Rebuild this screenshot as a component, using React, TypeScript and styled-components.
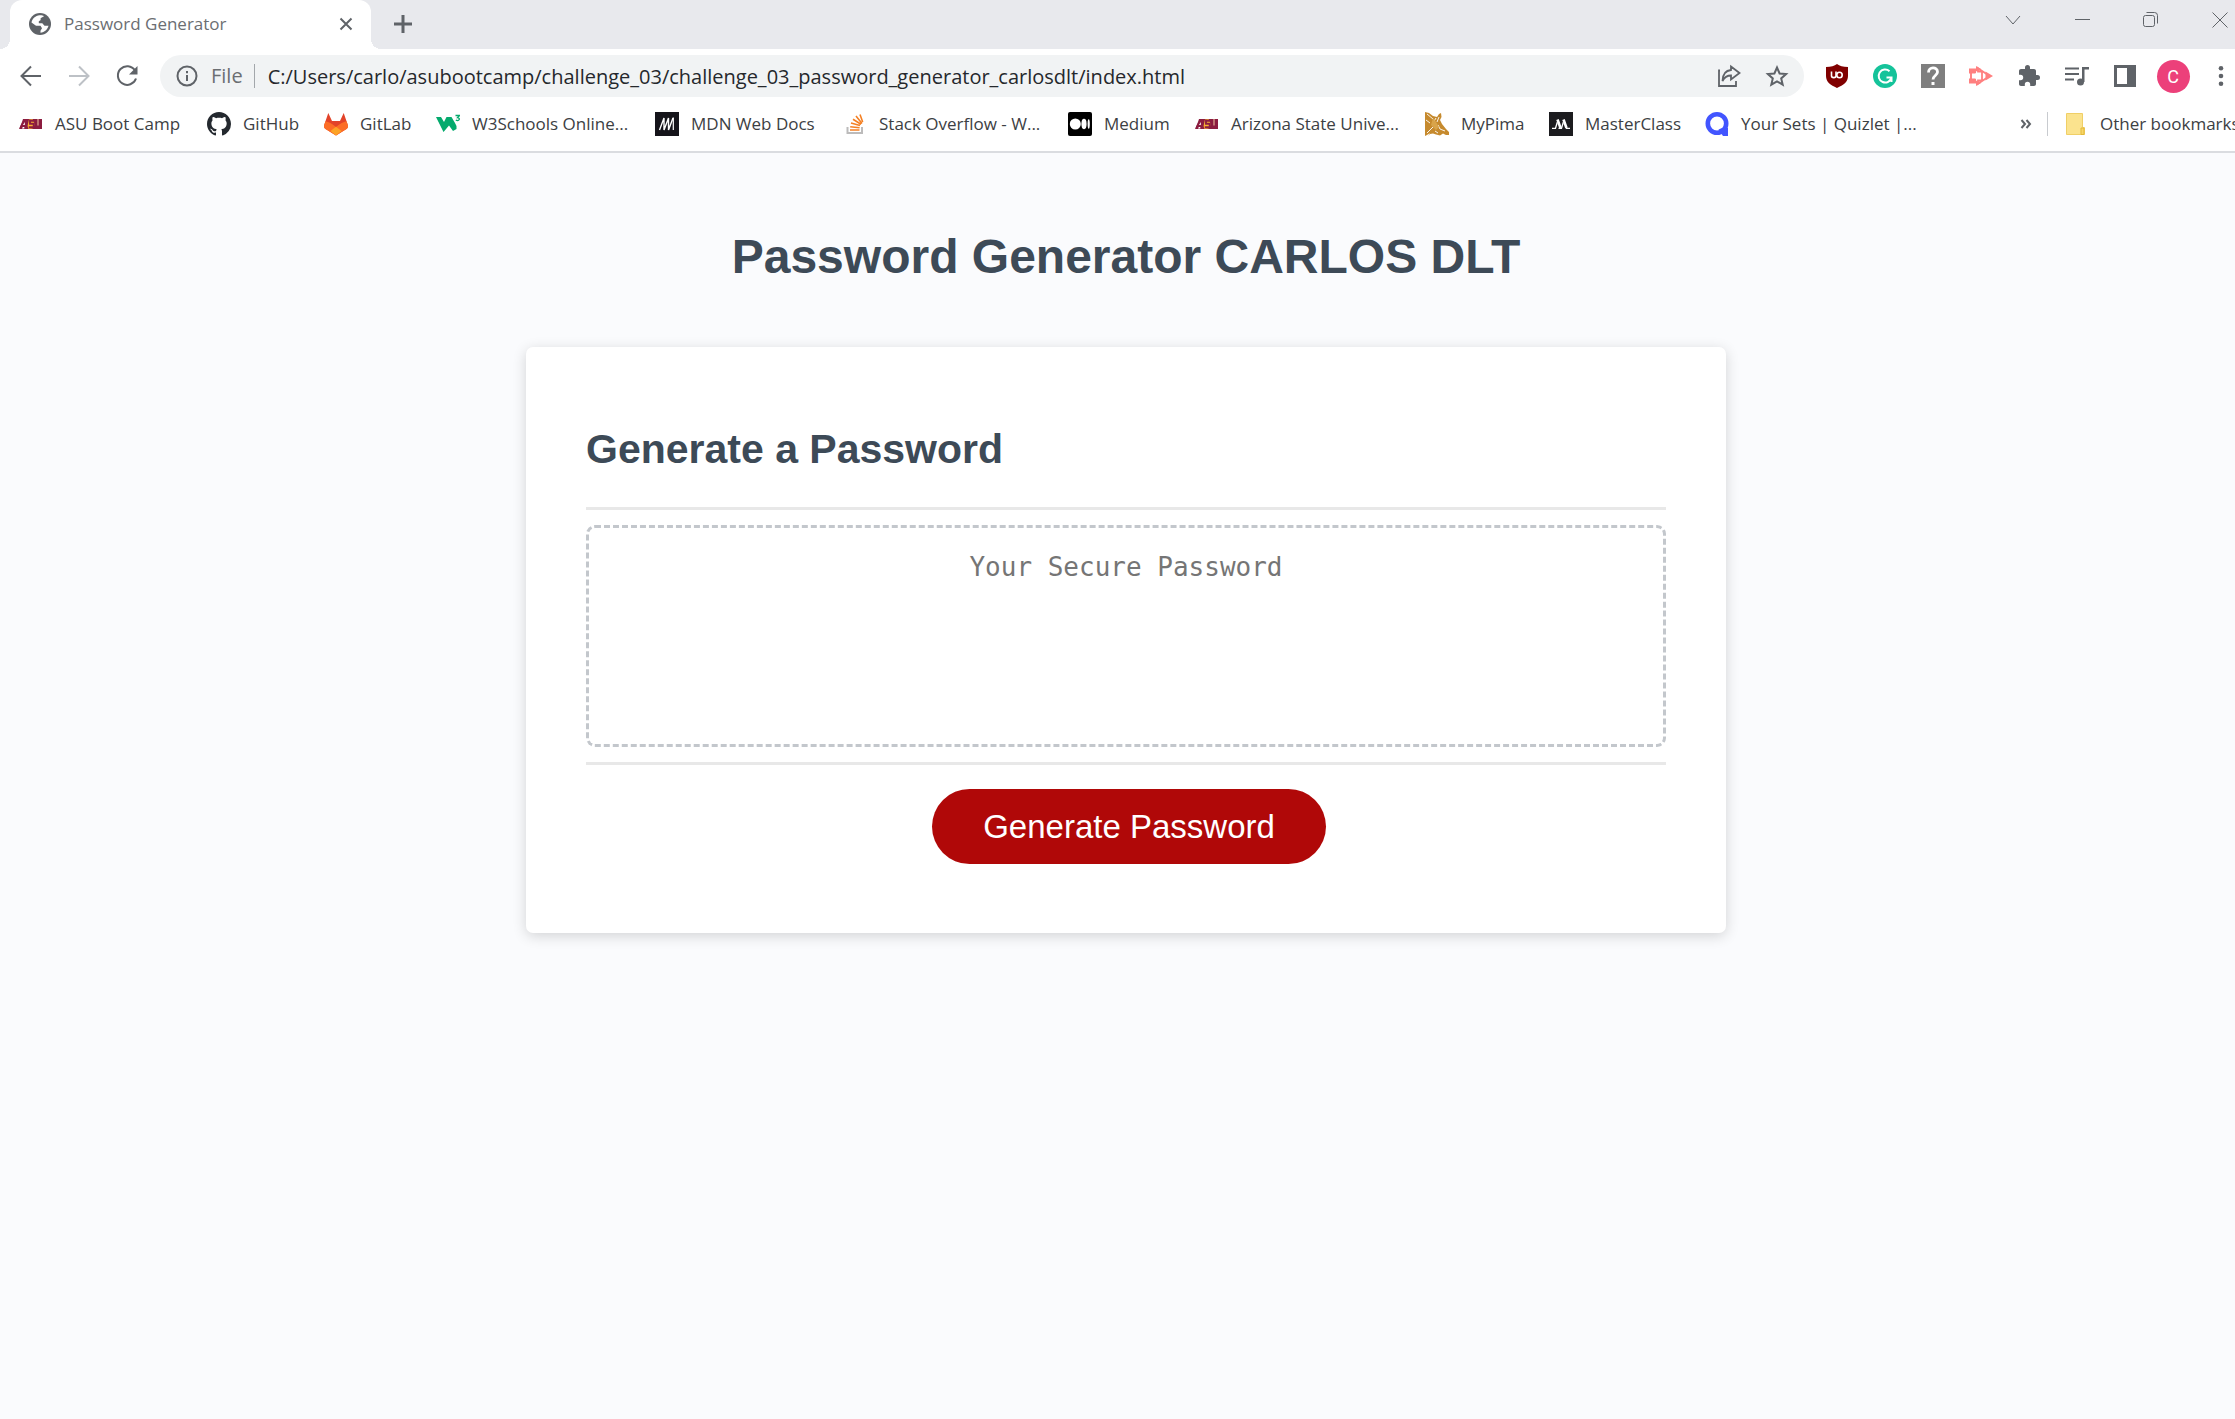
import React from "react";
import styled, { createGlobalStyle } from "styled-components";

const GlobalStyle = createGlobalStyle`
  *, *::before, *::after { box-sizing: border-box; }
  html, body { margin: 0; padding: 0; overflow-x: hidden; }
  body {
    background: #fafbfd;
    font-family: "Liberation Sans", Arial, sans-serif;
  }
  button { margin: 0; padding: 0; border: 0; background: none; font: inherit; color: inherit; }
  a { color: inherit; text-decoration: none; }
`;

const uiFont = `"Open Sans", "Noto Sans", sans-serif`;

/* The window runs 17px past the right edge of the viewport. */
const Window = styled.div`
  width: calc(100% + 17px);
  min-height: 100vh;
`;

const Chrome = styled.header`
  background: #fff;
  border-bottom: 2px solid #dadce0;
  font-family: ${uiFont};
  color: #3c4043;
`;

const TabStrip = styled.div`
  display: flex;
  height: 49px;
  padding-left: 10px;
  background: #e8e9ed;
`;

const Tab = styled.div`
  position: relative;
  display: flex;
  align-items: center;
  gap: 12px;
  width: 361px;
  padding: 0 15px 1px 18px;
  background: #fff;
  border-radius: 12px 12px 0 0;

  &::before,
  &::after {
    content: "";
    position: absolute;
    bottom: 0;
    width: 10px;
    height: 10px;
  }
  &::before {
    left: -10px;
    background: radial-gradient(circle at 0 0, #e8e9ed 10px, #fff 10px);
  }
  &::after {
    right: -10px;
    background: radial-gradient(circle at 100% 0, #e8e9ed 10px, #fff 10px);
  }
`;

const TabTitle = styled.span`
  flex: 1;
  font-size: 17px;
  line-height: 24px;
  color: #6b6e72;
`;

const IconButton = styled.button<{ $width?: number; $muted?: boolean }>`
  display: flex;
  flex: none;
  align-items: center;
  justify-content: center;
  width: ${(p) => p.$width ?? 48}px;
  height: ${(p) => (p.$width === 20 ? 20 : 42)}px;
  color: ${(p) => (p.$muted ? "#bdc1c6" : "#5f6368")};
`;

const NewTab = styled(IconButton)`
  margin: 3px 0 0 8px;
`;

const WindowControls = styled.div`
  display: flex;
  height: 40px;
  align-items: center;
  margin-left: auto;
  margin-right: -2px;
`;

const Toolbar = styled.div`
  display: flex;
  align-items: center;
  gap: 9px;
  padding: 6px 7px;
`;

const ButtonGroup = styled.div`
  display: flex;
`;

const AddressBar = styled.div`
  display: flex;
  flex: 1;
  align-items: center;
  height: 42px;
  padding-left: 15px;
  padding-right: 3px;
  background: #f1f3f4;
  border-radius: 21px;
`;

const Scheme = styled.span`
  padding: 0 11px 0 12px;
  font-size: 20px;
  line-height: 24px;
  color: #6b6e72;
`;

const Rule = styled.span`
  flex: none;
  width: 1px;
  height: 24px;
  background: #a3a7ab;
`;

const Address = styled.input`
  flex: 1;
  min-width: 0;
  height: 36px;
  padding: 0 0 0 13px;
  border: 0;
  outline: 0;
  background: transparent;
  font-family: ${uiFont};
  font-size: 20px;
  color: #25282c;
`;

const Avatar = styled.span`
  display: flex;
  align-items: center;
  justify-content: center;
  width: 33px;
  height: 33px;
  border-radius: 50%;
  background: #ec407a;
  color: #fff;
  font-family: Roboto, sans-serif;
  font-size: 18px;
`;

const Bookmarks = styled.nav`
  display: flex;
  align-items: center;
  height: 48px;
  padding: 0 0 6px 19px;
  font-size: 17px;
  line-height: 24px;
  white-space: nowrap;
`;

const Bookmark = styled.a<{ $width: number }>`
  display: flex;
  flex: none;
  align-items: center;
  gap: 12px;
  width: ${(p) => p.$width}px;

  svg { flex: none; }
`;

const Overflow = styled.div`
  display: flex;
  align-items: center;
  margin-left: auto;
`;

const BarRule = styled(Rule)`
  margin-right: 16px;
  background: #c8cbcf;
`;

const Main = styled.main`
  padding: 69px 24px;
  color: #3d4a57;
`;

const PageTitle = styled.h1`
  margin: 0;
  font-size: 48px;
  line-height: 70px;
  text-align: center;
`;

const Card = styled.section`
  display: flex;
  flex-direction: column;
  max-width: 1200px;
  margin: 55px auto 0;
  padding: 60px 60px 69px;
  background: #fff;
  border-radius: 7px;
  box-shadow: 0 3px 14px rgba(0, 0, 0, 0.16);
`;

const CardTitle = styled.h2`
  margin: 0;
  padding: 12px 0 28px;
  font-size: 41px;
  line-height: 60px;
`;

const PasswordArea = styled.div`
  padding: 15px 0;
  border-top: 3px solid #e8e8e8;
  border-bottom: 3px solid #e8e8e8;
`;

const PasswordBox = styled.textarea`
  display: block;
  width: 100%;
  height: 222px;
  padding: 21px;
  border: 3px dashed #c3c7cc;
  border-radius: 9px;
  outline: 0;
  resize: none;
  background: transparent;
  color: #3d4a57;
  font-family: "DejaVu Sans Mono", monospace;
  font-size: 26px;
  line-height: 36px;
  text-align: center;

  &::placeholder { color: #757575; opacity: 1; }
`;

const Generate = styled.button`
  align-self: center;
  height: 75px;
  margin: 24px 0 0 6px;
  padding: 0 51px;
  border-radius: 38px;
  background: #b00808;
  color: #fff;
  font-size: 33px;
`;

type SvgProps = { size?: number; box?: string; children: React.ReactNode };
const Svg = ({ size = 24, box = "0 0 24 24", children }: SvgProps) => (
  <svg width={size} height={size} viewBox={box} fill="none" aria-hidden="true">
    {children}
  </svg>
);

const Stroke = ({ d, w = 2 }: { d: string; w?: number }) => (
  <path d={d} stroke="currentColor" strokeWidth={w} />
);

const Globe = () => (
  <Svg>
    <circle cx="12" cy="12" r="11" fill="#5f6368" />
    <path
      d="M11.500 3.300c1.800-.2 3.500.2 4.500 1L13.800 5.500c-1.300.5-1.600 1.500-1 2.500l-2 1.300v1.900h3.500l2.200 2.600h4c-.8 3.700-4 6.600-8 6.900v-2l1.500-2.500-1.500-2.400H8L3.500 10.500C4.300 6.500 7.500 3.700 11.500 3.300z"
      fill="#fff"
    />
    <path d="M3.300 12.500l4.200 3 .5 2.500 2 1v1.500c-3.500-.8-6.500-4-6.700-8z" fill="#5f6368" />
  </Svg>
);

const Asu = () => (
  <Svg>
    <path d="M4 7h19v10H0l3-7z" fill="#8c1d40" />
    <path d="M10 7.500l3.500-.5 1.500 3 .5 3-2 3.500-4 .5-1-3z" fill="#f9b233" />
    <path
      d="M1.500 16L5.500 8.500h1.700V16M3.500 13.500h4M15 8.700h-4v3.100h3.700V15.300H9.800M17 7.500v7.800h4V7.500"
      stroke="#8c1d40"
      strokeWidth="1.900"
    />
    <path d="M4 13l1.800-3v3zM3 16.500l.8-1.500h1.500v1.500z" fill="#fff" />
    <path d="M18.500 7h1v6.500h-1z" fill="#f0c9a0" />
  </Svg>
);

const GitHub = () => (
  <Svg box="0 0 16 16">
    <path
      fill="#24292f"
      d="M8 0C3.580 0 0 3.580 0 8c0 3.540 2.290 6.530 5.470 7.590.4.070.55-.17.55-.38 0-.19-.01-.82-.01-1.490-2.010.37-2.530-.49-2.690-.94-.09-.23-.48-.94-.82-1.130-.28-.15-.68-.52-.01-.53.63-.01 1.080.58 1.230.82.72 1.210 1.870.87 2.330.66.070-.52.28-.87.51-1.070-1.780-.2-3.640-.89-3.640-3.950 0-.87.31-1.590.82-2.150-.08-.2-.36-1.020.08-2.120 0 0 .67-.21 2.200.82.64-.18 1.320-.27 2-.27s1.360.09 2 .27c1.530-1.040 2.200-.82 2.200-.82.44 1.100.16 1.920.08 2.120.51.56.82 1.270.82 2.150 0 3.070-1.870 3.750-3.650 3.950.29.25.54.73.54 1.480 0 1.070-.01 1.930-.01 2.200 0 .21.15.46.55.38A8.010 8.010 0 0 0 16 8c0-4.420-3.580-8-8-8z"
    />
  </Svg>
);

const GitLab = () => (
  <Svg>
    <path d="M4.300 1L8 9h8l3.700-8L24 13.500c.2 1.500-.3 2.500-1.500 3.500L12 23.500 1.500 17C.3 16-.2 15 0 13.500z" fill="#e24329" />
    <path d="M1.500 9.200C4.500 9.800 8 11.600 12 15c4-3.400 7.500-5.200 10.500-5.800L24 13.500c.2 1.500-.3 2.500-1.500 3.500L12 23.500 1.500 17C.3 16-.2 15 0 13.500z" fill="#fc6d26" />
    <path d="M12 14.800l5.500 4.200L12 23.500 6.500 19z" fill="#fca326" />
  </Svg>
);

const W3 = () => (
  <Svg>
    <path d="M0 5h5l3 5 2.500-5h5L19 11l1.500 3v3L17 19l-4-5.500L7.500 20z" fill="#04aa6d" />
    <path d="M19.500 3.500h4l-2 2.200c3.200.2 2 4-1.700 2.500" stroke="#04aa6d" strokeWidth="1.300" />
  </Svg>
);

const Mdn = () => (
  <Svg>
    <path d="M0 0h24v24H0z" fill="#15141a" />
    <path d="M4.500 18L9 6v12l4.500-12v12L18 6" stroke="#fff" strokeWidth="1.400" />
    <path d="M18.300 5.500V18" stroke="#fff" strokeWidth="1.200" />
  </Svg>
);

const StackOverflow = () => (
  <Svg>
    <path d="M4.500 15v6h14.500v-6" stroke="#bcbbbb" strokeWidth="2" />
    <path
      d="M7 18h9.500M7.200 14.800l9.400 1M8 11l9 2.600M10 7.200l8 5M13 4l6 7.500M17 2.500l2.700 7.500"
      stroke="#f48024"
      strokeWidth="1.600"
    />
  </Svg>
);

const Medium = () => (
  <Svg>
    <rect width="24" height="24" rx="2" fill="#000" />
    <circle cx="7.300" cy="12" r="5.500" fill="#fff" />
    <ellipse cx="16" cy="12" rx="2.600" ry="5.200" fill="#fff" />
    <ellipse cx="20.700" cy="12" rx="1.100" ry="4.700" fill="#fff" />
  </Svg>
);

const Pima = () => (
  <Svg>
    <path
      d="M0 0l4 1 4 3 4 1 2-3 2-1 .5 4-1.500 3 2 4 4 5 3 3 .5 3-3.500 0-3-1.500-3 2-4-1-3-1-3 .5-2 2H3l2-3-3 2-2 1z"
      fill="#c68a2e"
    />
    <path d="M2 2l6 5M11 6l-3 5M2 21l6-6M13 13l2 4 5 2M1 8l4 3M10 19l3 2M14 5l-2 5" stroke="#fff" strokeWidth="0.900" />
    <path d="M8 6l3 4 3 5-3 3-5-5z" fill="#d9a44a" />
  </Svg>
);

const MasterClass = () => (
  <Svg>
    <path d="M0 0h24v24H0z" fill="#1c1c1f" />
    <path d="M8.500 7.500l3 8.500M14.500 7.500l3 8.500" stroke="#fff" strokeWidth="2.600" />
    <path d="M3 16.300h3.500l1.800-6M9.500 16.300h3l1.800-6M17 16.300h4" stroke="#fff" strokeWidth="1.300" />
  </Svg>
);

const Quizlet = () => (
  <Svg>
    <circle cx="12" cy="11.500" r="9.200" stroke="#4255ff" strokeWidth="4.600" />
    <path d="M13.500 17.500l3.500-1.500h6v8h-5z" fill="#4255ff" />
  </Svg>
);

const Folder = () => (
  <Svg>
    <path d="M2.500 1.500h16v14h2v7h-18z" fill="#fbe38e" stroke="#f0cf66" />
    <path d="M17 22.500v-6.500h3v6.500z" fill="#f8d668" stroke="#e2b93b" />
  </Svg>
);

const bookmarks = [
  { label: "ASU Boot Camp", Icon: Asu, width: 188 },
  { label: "GitHub", Icon: GitHub, width: 117 },
  { label: "GitLab", Icon: GitLab, width: 112 },
  { label: "W3Schools Online...", Icon: W3, width: 219 },
  { label: "MDN Web Docs", Icon: Mdn, width: 188 },
  { label: "Stack Overflow - W...", Icon: StackOverflow, width: 225 },
  { label: "Medium", Icon: Medium, width: 127 },
  { label: "Arizona State Unive...", Icon: Asu, width: 230 },
  { label: "MyPima", Icon: Pima, width: 124 },
  { label: "MasterClass", Icon: MasterClass, width: 156 },
  { label: "Your Sets | Quizlet |...", Icon: Quizlet, width: 230 },
];

const extensions = [
  {
    label: "uBlock Origin",
    icon: (
      <Svg>
        <path d="M12 0c2.500 2 6 3 11 3v9c0 6-4.500 9-11 12C5.500 21 1 18 1 12V3c5 0 8.500-1 11-3z" fill="#800000" />
        <path d="M6.500 7.500v4.200c0 2.500 4.500 2.500 4.500 0V7.500" stroke="#fff" strokeWidth="1.600" />
        <circle cx="14.500" cy="11" r="2.700" stroke="#fff" strokeWidth="1.600" />
      </Svg>
    ),
  },
  {
    label: "Grammarly",
    icon: (
      <Svg>
        <circle cx="12" cy="12" r="12" fill="#15c39a" />
        <path d="M16.500 7.200A6.500 6.500 0 1 0 18.500 13.500M13.500 13.500h5v4.500" stroke="#fff" strokeWidth="2" />
      </Svg>
    ),
  },
  {
    label: "Help",
    icon: (
      <Svg>
        <path d="M0 0h24v24H0z" fill="#7f7f7f" />
        <path d="M7.500 8.500c0-6 9-6 9-.5 0 3.500-4.500 3.500-4.500 7.500" stroke="#fff" strokeWidth="2.800" />
        <path d="M10.500 18h3v3h-3z" fill="#fff" />
      </Svg>
    ),
  },
  {
    label: "Screencast",
    icon: (
      <Svg>
        <path d="M9 4.200V7.500h4v9H9v3.300L20.500 12z" stroke="#ff8080" strokeWidth="1.800" />
        <path d="M0 4.500h7v5h-1v5h1v5H0v-5h1.500v-5H0zM7 2l5 3-5 2.500zM7 16.500l5 2.500-5 3zM16.500 7.500L24 12l-7.500 4.500z" fill="#ff8080" />
        <path d="M2.500 9.500h9v5h-9z" fill="#fff" />
        <path d="M2 9v6" stroke="#ff8080" strokeWidth="1.800" />
      </Svg>
    ),
  },
  {
    label: "Extensions",
    icon: (
      <Svg>
        <path
          d="M20.500 11H19V7c0-1.100-.9-2-2-2h-4V3.500a2.500 2.500 0 0 0-5 0V5H4c-1.100 0-2 .9-2 2v3.800h1.500a2.700 2.700 0 0 1 0 5.400H2V20c0 1.100.9 2 2 2h3.800v-1.500a2.700 2.700 0 0 1 5.400 0V22H17c1.100 0 2-.9 2-2v-4h1.500a2.500 2.500 0 0 0 0-5z"
          fill="currentColor"
        />
      </Svg>
    ),
  },
  {
    label: "Media controls",
    icon: (
      <Svg>
        <Stroke d="M0 4.500h14M0 10h14M0 15.500h9" />
        <circle cx="15.500" cy="18" r="3.500" fill="currentColor" />
        <path d="M17 3h7v2.500h-4.500V18H17z" fill="currentColor" />
      </Svg>
    ),
  },
  {
    label: "Side panel",
    icon: (
      <Svg>
        <path d="M1 1h22v22H1zM4 4v16h10V4z" fill="currentColor" fillRule="evenodd" />
      </Svg>
    ),
  },
];

export default function App() {
  return (
    <>
      <GlobalStyle />
      <Window>
        <Chrome>
          <TabStrip>
            <Tab>
              <Globe />
              <TabTitle>Password Generator</TabTitle>
              <IconButton $width={20} aria-label="Close tab">
                <Svg size={20} box="0 0 20 20">
                  <Stroke d="M4.500 4.500l11 11M15.500 4.500l-11 11" />
                </Svg>
              </IconButton>
            </Tab>
            <NewTab aria-label="New tab">
              <Svg>
                <Stroke d="M12 3v18M3 12h18" w={3} />
              </Svg>
            </NewTab>
            <WindowControls>
              <IconButton $width={69} aria-label="Search tabs">
                <Svg>
                  <Stroke d="M5 8l7 8 7-8" w={1} />
                </Svg>
              </IconButton>
              <IconButton $width={69} aria-label="Minimize">
                <Svg>
                  <Stroke d="M5 11.500h15" w={1} />
                </Svg>
              </IconButton>
              <IconButton $width={69} aria-label="Restore">
                <Svg>
                  <rect x="4.500" y="7.500" width="11" height="11" rx="2" stroke="currentColor" />
                  <Stroke d="M7.500 4.500h8a3 3 0 0 1 3 3v8" w={1} />
                </Svg>
              </IconButton>
              <IconButton $width={69} aria-label="Close window">
                <Svg>
                  <Stroke d="M4.500 4.500l15 15M19.500 4.500l-15 15" w={1} />
                </Svg>
              </IconButton>
            </WindowControls>
          </TabStrip>

          <Toolbar>
            <ButtonGroup>
              <IconButton aria-label="Back">
                <Svg>
                  <Stroke d="M22 12H3M12 2.500L2.500 12l9.500 9.500" />
                </Svg>
              </IconButton>
              <IconButton $muted aria-label="Forward">
                <Svg>
                  <Stroke d="M2 12h19M12 2.500l9.500 9.500-9.500 9.500" />
                </Svg>
              </IconButton>
              <IconButton aria-label="Reload">
                <Svg>
                  <Stroke d="M20 6.500A9.300 9.300 0 1 0 21 14.500" w={2} />
                  <path d="M22.500 2v8.500H14z" fill="currentColor" />
                </Svg>
              </IconButton>
            </ButtonGroup>
            <AddressBar>
              <Svg>
                <circle cx="12" cy="12" r="9.500" stroke="#5f6368" strokeWidth="2" />
                <path d="M11 7h2v2.300h-2zM11 11h2v6h-2z" fill="#5f6368" />
              </Svg>
              <Scheme>File</Scheme>
              <Rule />
              <Address
                aria-label="Address"
                defaultValue="C:/Users/carlo/asubootcamp/challenge_03/challenge_03_password_generator_carlosdlt/index.html"
              />
              <IconButton aria-label="Share">
                <Svg>
                  <Stroke d="M3 6.500H2v15.500h17v-5M14 2.500l8.500 6.500-8.500 6.500v-4C10 11.500 7.500 13 5.500 17c.2-6 3-10.500 8.500-11z" w={1.8} />
                </Svg>
              </IconButton>
              <IconButton aria-label="Bookmark this page">
                <Svg>
                  <Stroke d="M12 3.500l2.600 6 6.500.6-4.900 4.300 1.500 6.300-5.700-3.400-5.700 3.400 1.500-6.300-4.900-4.300 6.500-.6z" />
                </Svg>
              </IconButton>
            </AddressBar>
            <ButtonGroup>
              {extensions.map((e) => (
                <IconButton key={e.label} aria-label={e.label}>
                  {e.icon}
                </IconButton>
              ))}
              <IconButton aria-label="Profile">
                <Avatar>C</Avatar>
              </IconButton>
              <IconButton aria-label="Menu">
                <Svg>
                  <g fill="currentColor">
                    <circle cx="12" cy="4.300" r="2.300" />
                    <circle cx="12" cy="12" r="2.300" />
                    <circle cx="12" cy="19.700" r="2.300" />
                  </g>
                </Svg>
              </IconButton>
            </ButtonGroup>
          </Toolbar>

          <Bookmarks aria-label="Bookmarks">
            {bookmarks.map(({ label, Icon, width }) => (
              <Bookmark key={label} href="#" $width={width}>
                <Icon />
                {label}
              </Bookmark>
            ))}
            <Overflow>
              <IconButton $width={42} aria-label="More bookmarks">
                <Svg>
                  <Stroke d="M7.500 8l3.500 4-3.500 4M12.500 8l3.500 4-3.500 4" />
                </Svg>
              </IconButton>
              <BarRule />
              <Bookmark href="#" $width={188}>
                <Folder />
                Other bookmarks
              </Bookmark>
            </Overflow>
          </Bookmarks>
        </Chrome>

        <Main>
          <PageTitle>Password Generator CARLOS DLT</PageTitle>
          <Card>
            <CardTitle>Generate a Password</CardTitle>
            <PasswordArea>
              <PasswordBox readOnly placeholder="Your Secure Password" aria-label="Your Secure Password" />
            </PasswordArea>
            <Generate>Generate Password</Generate>
          </Card>
        </Main>
      </Window>
    </>
  );
}
